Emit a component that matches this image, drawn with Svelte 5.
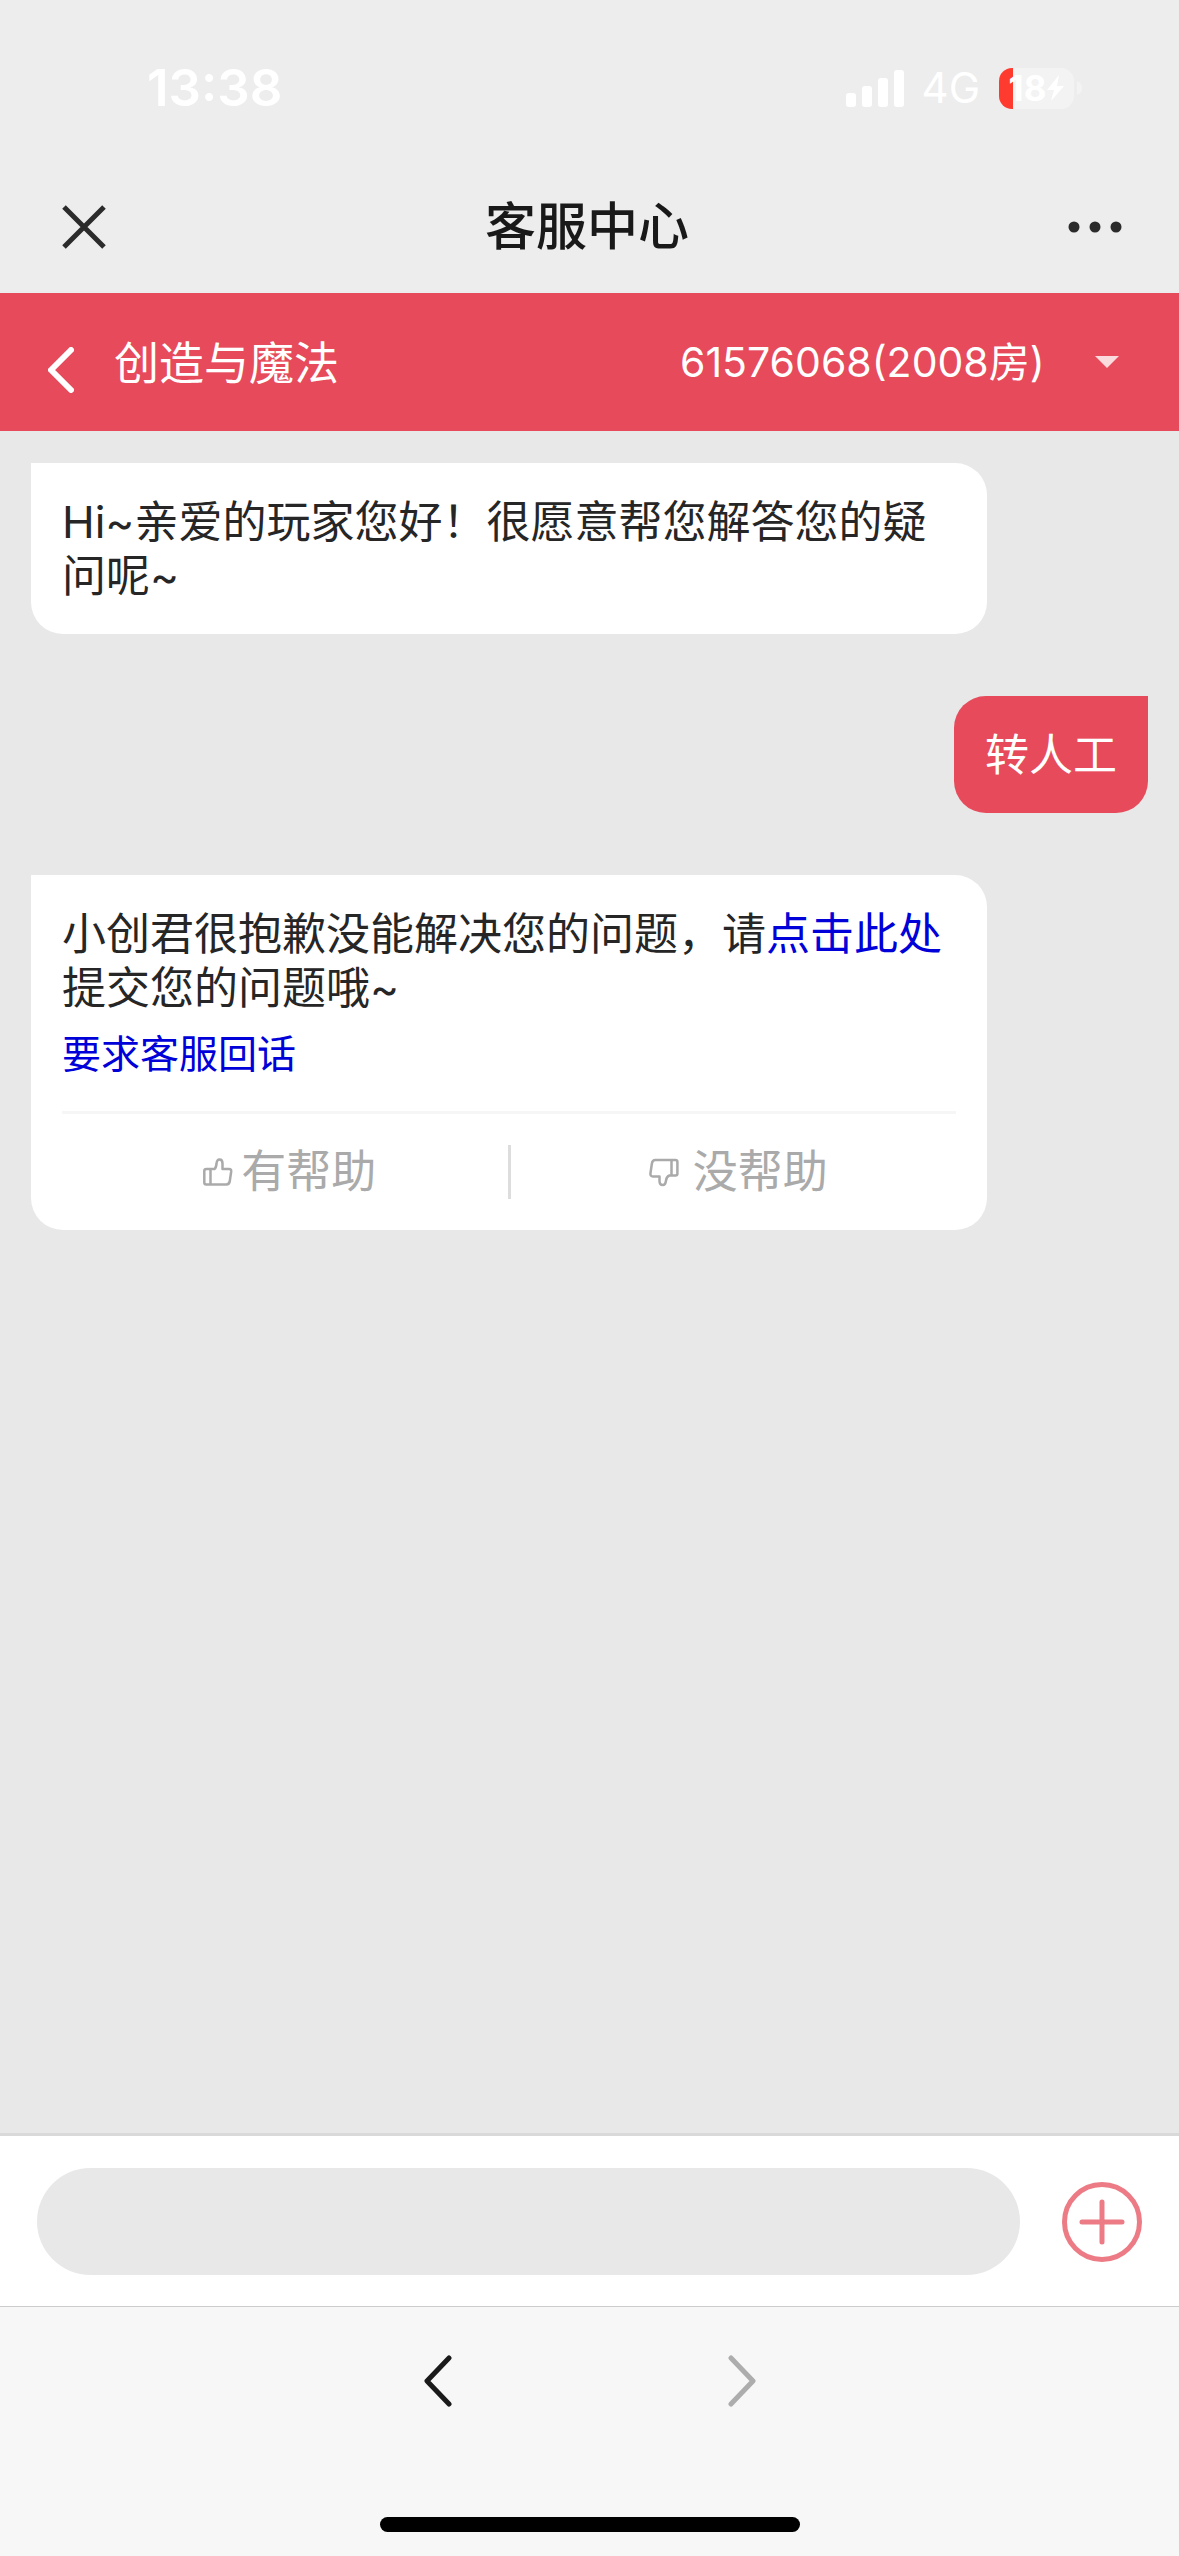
<script lang="ts">
	type Vote = 'up' | 'down';

	let draft = $state('');
	let vote = $state<Vote | null>(null);
	let account = $state('61576068');

	const accounts = [{ id: '61576068', label: '61576068(2008房)' }];
	const bars = [14, 21, 29, 37];
</script>

<div class="app" lang="zh-CN">
	<div class="status">
		<span class="time">13:38</span>
		<div class="signals">
			<svg class="bars" viewBox="0 0 58 37" aria-hidden="true">
				{#each bars as h, i (h)}
					<rect x={i * 16} y={37 - h} width="10" height={h} rx="3" />
				{/each}
			</svg>
			<span class="network">4G</span>
			<div class="battery">
				<span class="level">18</span>
				<svg class="bolt" viewBox="0 0 17 26" aria-hidden="true">
					<path d="M12 0L0 15h7L4 26 17 11h-7z" />
				</svg>
				<svg class="tip" viewBox="0 0 5 14" aria-hidden="true">
					<path d="M0 0q5 2 5 7t-5 7z" />
				</svg>
			</div>
		</div>
	</div>

	<header class="nav">
		<button type="button" class="icon-btn" aria-label="关闭">
			<svg class="close" viewBox="0 0 44 44"><path d="M2 2l40 40M42 2L2 42" /></svg>
		</button>
		<h1>客服中心</h1>
		<button type="button" class="icon-btn" aria-label="更多">
			<svg class="more" viewBox="0 0 54 12">
				<circle cx="6" cy="6" r="5.5" />
				<circle cx="27" cy="6" r="5.5" />
				<circle cx="48" cy="6" r="5.5" />
			</svg>
		</button>
	</header>

	<div class="game-bar">
		<button type="button" class="icon-btn" aria-label="返回">
			<svg class="back" viewBox="0 0 26 46"><path d="M23 3L3 23l20 20" /></svg>
		</button>
		<h2>创造与魔法</h2>
		<label class="account">
			<select bind:value={account} aria-label="账号">
				{#each accounts as a (a.id)}
					<option value={a.id}>{a.label}</option>
				{/each}
			</select>
			<svg class="caret" viewBox="0 0 24 12" aria-hidden="true"><path d="M0 0h24L12 12z" /></svg>
		</label>
	</div>

	<main class="messages">
		<div class="bubble service">Hi~亲爱的玩家您好！很愿意帮您解答您的疑问呢~</div>

		<div class="bubble player">转人工</div>

		<div class="bubble service">
			<p>小创君很抱歉没能解决您的问题，请<a href="#submit">点击此处</a>提交您的问题哦~</p>
			<a class="callback" href="#callback">要求客服回话</a>
			<div class="feedback">
				<button type="button" class="vote" aria-pressed={vote === 'up'} onclick={() => (vote = 'up')}>
					<svg class="thumb" viewBox="0 0 30 30" aria-hidden="true">
						<path d="M3.5 12h8q1.5-1 2-5 .3-4.5 3-4.500 3 0 3 4v5.500h6.500q2.500 0 2.200 2.500l-1.400 9.500q-.5 3.500-3.500 3.500h-20q-2 0-2-2v-11.500q0-2 2.200-2zM7.500 12v15.500" />
					</svg>
					<span>有帮助</span>
				</button>
				<button type="button" class="vote spaced" aria-pressed={vote === 'down'} onclick={() => (vote = 'down')}>
					<svg class="thumb" viewBox="0 0 30 30" aria-hidden="true">
						<path d="M26.500 18.500h-6q-3 1-3.500 5-.5 4.500-3.200 4.500-3.300 0-3.300-4v-4.500h-6.500q-3 0-2.500-3.500l1.400-9.500q.5-3.500 3.500-3.500h20q2 0 2 2v11.500q0 2-1.900 2zM22.500 3v15.500" />
					</svg>
					<span>没帮助</span>
				</button>
			</div>
		</div>
	</main>

	<form class="composer" onsubmit={(e) => e.preventDefault()}>
		<input type="text" bind:value={draft} aria-label="输入消息" />
		<button type="button" class="icon-btn" aria-label="添加">
			<svg class="plus" viewBox="0 0 80 80">
				<circle cx="40" cy="40" r="37.5" />
				<path d="M40 20v40M20 40h40" />
			</svg>
		</button>
	</form>

	<footer class="toolbar">
		<div class="history">
			<button type="button" class="icon-btn" aria-label="后退">
				<svg class="chevron" viewBox="0 0 28 52"><path d="M25 3L3 26l22 23" /></svg>
			</button>
			<button type="button" class="icon-btn" aria-label="前进" disabled>
				<svg class="chevron" viewBox="0 0 28 52"><path d="M3 3l22 23L3 49" /></svg>
			</button>
		</div>
		<div class="home-indicator"></div>
	</footer>
</div>

<style>
	:global(body) {
		margin: 0;
	}

	.app {
		display: flex;
		flex-direction: column;
		min-height: 100vh;
		background: #e8e8e8;
		color: #262626;
		font-family: Inter, 'Noto Sans CJK SC', sans-serif;
		font-size: 44px;
		line-height: 54px;
	}

	button,
	input,
	select {
		font: inherit;
		color: inherit;
		border: none;
		padding: 0;
		margin: 0;
		background: none;
	}

	h1,
	h2,
	p {
		margin: 0;
	}

	svg {
		display: block;
		fill: none;
	}

	.icon-btn {
		display: flex;
		flex: none;
	}

	.status {
		display: flex;
		justify-content: space-between;
		align-items: center;
		height: 176px;
		padding: 0 105px 0 147px;
		box-sizing: border-box;
		background: #ededed;
		color: #fff;
	}

	.time {
		font-size: 51px;
		font-weight: 600;
	}

	.signals {
		display: flex;
		align-items: center;
	}

	.bars {
		width: 58px;
		height: 37px;
		fill: #fff;
	}

	.network {
		margin: 0 19px 0 18px;
		font-size: 42px;
	}

	.battery {
		position: relative;
		display: flex;
		align-items: center;
		justify-content: center;
		gap: 1px;
		width: 75px;
		height: 41px;
		border-radius: 13px;
		background: linear-gradient(to right, #ff3b30 14px, #f3f3f3 14px);
	}

	.level {
		font-size: 35px;
		font-weight: 700;
		line-height: 41px;
	}

	.bolt {
		width: 17px;
		height: 26px;
		fill: #fff;
	}

	.tip {
		position: absolute;
		left: 78px;
		width: 5px;
		height: 14px;
		fill: #f3f3f3;
	}

	.nav {
		display: flex;
		justify-content: space-between;
		align-items: center;
		height: 117px;
		padding: 0 57px 16px 62px;
		box-sizing: border-box;
		background: #ededed;
	}

	h1 {
		font-size: 51px;
		font-weight: 500;
		color: #191919;
	}

	.close {
		width: 44px;
		height: 44px;
		stroke: #2b2b2b;
		stroke-width: 5;
	}

	.more {
		width: 54px;
		height: 12px;
		fill: #2b2b2b;
	}

	.game-bar {
		display: flex;
		align-items: center;
		height: 138px;
		padding: 0 60px 0 48px;
		box-sizing: border-box;
		background: #e64a5b;
		color: #fff;
	}

	.game-bar .icon-btn {
		padding-top: 16px;
	}

	.back {
		width: 26px;
		height: 46px;
		stroke: #fff;
		stroke-width: 6;
		stroke-linecap: round;
		stroke-linejoin: round;
	}

	h2 {
		margin-left: 40px;
		padding-top: 4px;
		font-size: 45px;
		font-weight: 400;
	}

	.account {
		display: flex;
		align-items: center;
		gap: 50px;
		margin-left: auto;
	}

	select {
		appearance: none;
		font-size: 41px;
	}

	option {
		color: #262626;
	}

	.caret {
		width: 24px;
		height: 12px;
		fill: #fbdadd;
	}

	.messages {
		display: flex;
		flex: 1;
		flex-direction: column;
		gap: 62px;
		padding: 32px 31px;
	}

	.bubble {
		padding: 32px 31px 31px;
		border-radius: 32px;
	}

	.service {
		margin-right: 161px;
		border-top-left-radius: 0;
		background: #fff;
	}

	.player {
		align-self: flex-end;
		border-top-right-radius: 0;
		background: #e64a5b;
		color: #fff;
	}

	a {
		color: #0000d8;
		text-decoration: none;
	}

	.callback {
		display: block;
		margin: 12px 0 30px;
		font-size: 39px;
	}

	.feedback {
		display: flex;
		padding-top: 31px;
		border-top: 3px solid #f6f6f6;
		color: #aaa;
	}

	.vote {
		display: flex;
		flex: 1;
		align-items: center;
		justify-content: center;
		gap: 8px;
		padding-left: 10px;
		font-size: 45px;
	}

	.vote + .vote {
		border-left: 3px solid #ddd;
	}

	.spaced {
		gap: 14px;
	}

	.thumb {
		width: 30px;
		height: 30px;
		stroke: #aaa;
		stroke-width: 2.5;
		stroke-linejoin: round;
	}

	.composer {
		display: flex;
		align-items: center;
		gap: 42px;
		padding: 32px 37px 31px;
		border-top: 3px solid #d9d9d9;
		background: #fff;
	}

	input {
		flex: 1;
		min-width: 0;
		height: 107px;
		padding: 0 40px;
		box-sizing: border-box;
		border-radius: 54px;
		background: #e8e8e8;
	}

	.plus {
		width: 80px;
		height: 80px;
		stroke: #ec7b85;
		stroke-width: 5;
		stroke-linecap: round;
	}

	.toolbar {
		display: flex;
		flex-direction: column;
		align-items: center;
		padding: 48px 0 24px;
		border-top: 1px solid #ccc;
		background: #f7f7f7;
	}

	.history {
		display: flex;
		gap: 276px;
		margin-bottom: 110px;
	}

	.chevron {
		width: 28px;
		height: 52px;
		stroke: #1a1a1a;
		stroke-width: 5;
		stroke-linecap: round;
		stroke-linejoin: round;
	}

	button:disabled .chevron {
		stroke: #adadad;
	}

	.home-indicator {
		width: 420px;
		height: 15px;
		border-radius: 8px;
		background: #000;
	}
</style>
